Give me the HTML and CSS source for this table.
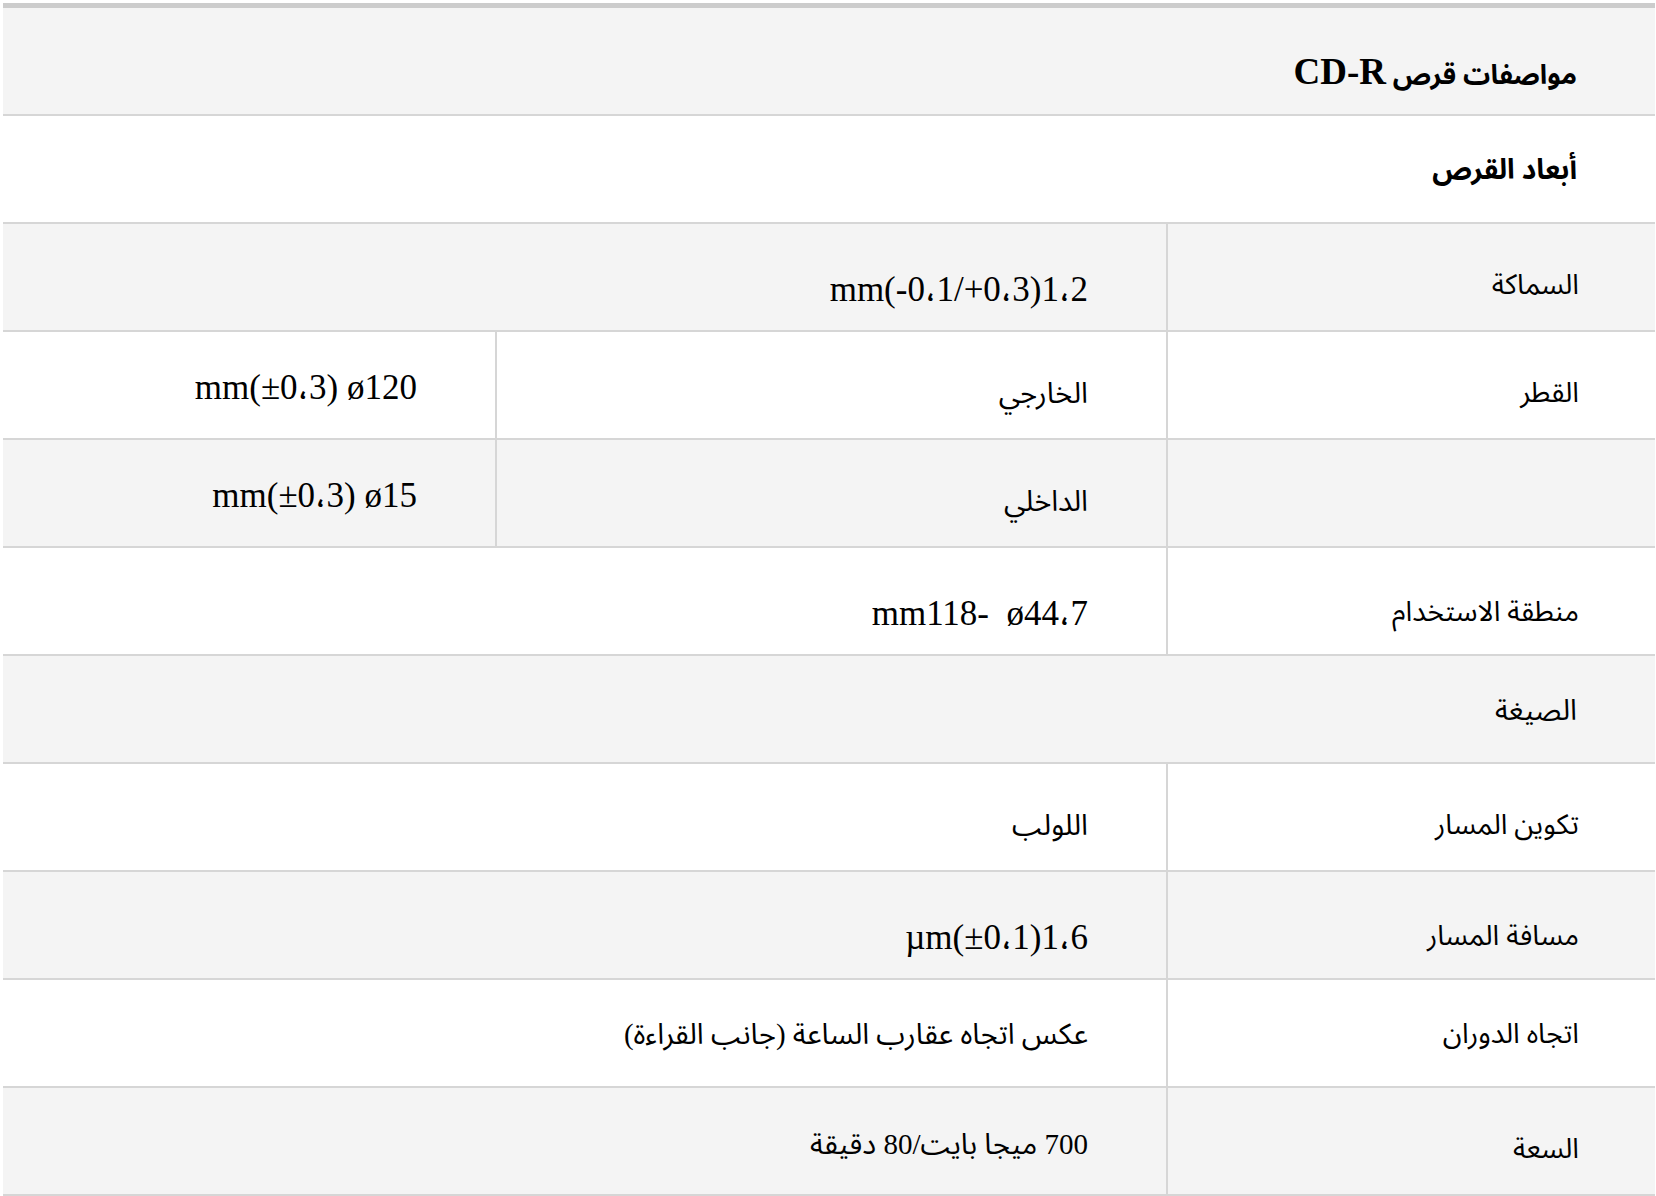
FILE: index.html
```html
<!DOCTYPE html>
<html lang="ar" dir="rtl">
<head>
<meta charset="utf-8">
<title>مواصفات قرص CD-R</title>
<link rel="stylesheet" href="styles.css">
</head>
<body>
<div class="page">
<table class="spec">
  <colgroup>
    <col class="c-label">
    <col class="c-mid">
    <col class="c-end">
  </colgroup>
  <tbody>
    <tr class="shade">
      <td colspan="3" class="title">مواصفات قرص <span class="latin">CD-R</span></td>
    </tr>
    <tr>
      <td colspan="3" class="section up">أبعاد القرص</td>
    </tr>
    <tr class="shade">
      <td class="label">السماكة</td>
      <td colspan="2" class="val low"><span class="ltr">mm(-0،1/+0،3)1،2</span></td>
    </tr>
    <tr>
      <td class="label">القطر</td>
      <td class="val split">الخارجي</td>
      <td class="val high"><span class="ltr">mm(±0،3) ø120</span></td>
    </tr>
    <tr class="shade">
      <td class="label"></td>
      <td class="val split">الداخلي</td>
      <td class="val high"><span class="ltr">mm(±0،3) ø15</span></td>
    </tr>
    <tr>
      <td class="label mid">منطقة الاستخدام</td>
      <td colspan="2" class="val low"><span class="ltr pre">mm118-  ø44،7</span></td>
    </tr>
    <tr class="shade">
      <td colspan="3" class="section plain up">الصيغة</td>
    </tr>
    <tr>
      <td class="label">تكوين المسار</td>
      <td colspan="2" class="val">اللولب</td>
    </tr>
    <tr class="shade">
      <td class="label mid">مسافة المسار</td>
      <td colspan="2" class="val low"><span class="ltr">µm(±0،1)1،6</span></td>
    </tr>
    <tr>
      <td class="label up">اتجاه الدوران</td>
      <td colspan="2" class="val up">عكس اتجاه عقارب الساعة (جانب القراءة)</td>
    </tr>
    <tr class="shade">
      <td class="label">السعة</td>
      <td colspan="2" class="val high">700 ميجا بايت/80 دقيقة</td>
    </tr>
  </tbody>
</table>
</div>
</body>
</html>
```
FILE: styles.css
```css
html, body {
  margin: 0;
  padding: 0;
  background: #ffffff;
}

.page {
  padding: 3px 1px 0 3px;
}

.spec {
  width: 1652px;
  table-layout: fixed;
  border-collapse: separate;
  border-spacing: 0;
  border-top: 5px solid #cccccc;
  font-family: "Liberation Serif", "Noto Sans Arabic", "DejaVu Sans", serif;
  font-size: 29px;
  color: #000000;
}

.c-label { width: 489px; }
.c-mid { width: 671px; }
.c-end { width: 492px; }

.spec td {
  box-sizing: border-box;
  height: 108px;
  padding: 16px 78px 0 78px;
  text-align: right;
  vertical-align: middle;
  border-bottom: 2px solid #d6d6d6;
  line-height: 1.2;
}

.spec tr.shade td {
  background: #f4f4f4;
}

.spec td.label {
  border-left: 2px solid #d6d6d6;
  padding-right: 76px;
  font-size: 28px;
}

.spec td.split {
  border-left: 2px solid #d6d6d6;
}

.spec td.title {
  font-weight: bold;
  font-size: 27px;
  padding-top: 22px;
}

.spec td.section {
  font-weight: bold;
  font-size: 28px;
}

.spec td.section.plain {
  font-weight: normal;
  font-size: 29px;
}

.spec td.up {
  padding-top: 2px;
}

.spec td.high {
  padding-top: 6px;
}

.spec td.low {
  padding-top: 26px;
}

.spec td.mid {
  padding-top: 22px;
}

.latin {
  font-size: 37px;
}

.ltr {
  direction: ltr;
  unicode-bidi: isolate;
  font-size: 35px;
}

.pre {
  white-space: pre;
}
```
